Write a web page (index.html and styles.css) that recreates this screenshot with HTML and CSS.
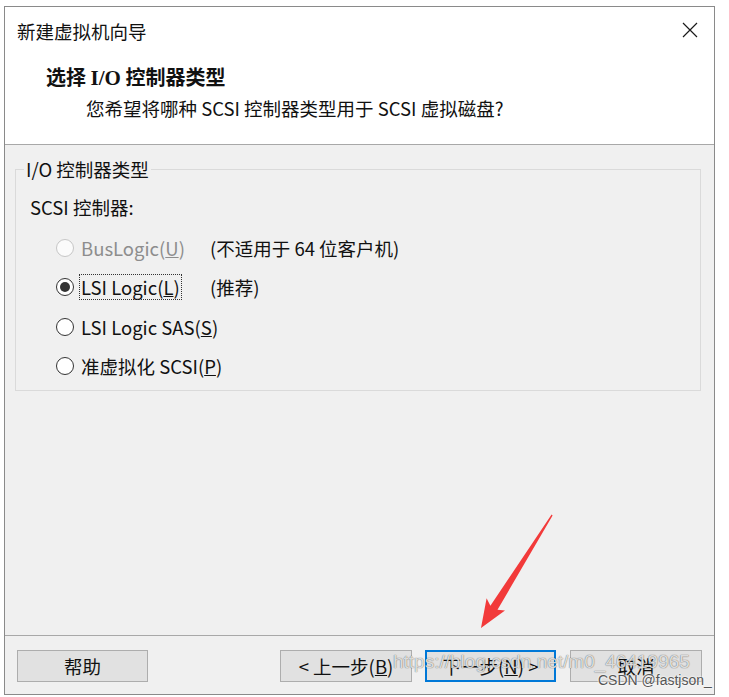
FILE: index.html
```html
<!DOCTYPE html>
<html lang="zh-CN">
<head>
<meta charset="utf-8">
<title>新建虚拟机向导</title>
<link rel="stylesheet" href="styles.css">
</head>
<body>
<div class="window">
  <div class="header">
    <div class="titlebar">
      <span class="title">新建虚拟机向导</span>
      <svg class="close" width="16" height="16" viewBox="0 0 16 16"><path d="M1 1 L15 15 M15 1 L1 15" stroke="#1a1a1a" stroke-width="1.2" fill="none"/></svg>
    </div>
    <div class="heading">选择 <span class="latin">I/O</span> 控制器类型</div>
    <div class="subtitle">您希望将哪种 SCSI 控制器类型用于 SCSI 虚拟磁盘?</div>
  </div>
  <div class="content">
    <fieldset class="group">
      <legend>I/O 控制器类型</legend>
      <div class="group-label">SCSI 控制器:</div>
      <div class="options">
        <div class="row disabled">
          <span class="radio"></span>
          <span class="opt"><span class="lbl">BusLogic(<u>U</u>)</span></span>
          <span class="note">(不适用于 64 位客户机)</span>
        </div>
        <div class="row">
          <span class="radio checked"></span>
          <span class="opt"><span class="lbl focus">LSI Logic(<u>L</u>)</span></span>
          <span class="note">(推荐)</span>
        </div>
        <div class="row">
          <span class="radio"></span>
          <span class="opt"><span class="lbl">LSI Logic SAS(<u>S</u>)</span></span>
        </div>
        <div class="row">
          <span class="radio"></span>
          <span class="opt"><span class="lbl">准虚拟化 SCSI(<u>P</u>)</span></span>
        </div>
      </div>
    </fieldset>
  </div>
  <div class="footer">
    <button class="btn help">帮助</button>
    <button class="btn">&lt; 上一步(<u>B</u>)</button>
    <button class="btn primary">下一步(<u>N</u>) &gt;</button>
    <button class="btn">取消</button>
  </div>
</div>
<svg class="arrow" width="729" height="697" viewBox="0 0 729 697">
  <polygon points="552.6,515.4 497.5,609.8 505,610.5 481,628 486.6,598.2 490.4,605.8 551.6,514.6" fill="#f23a3a"/>
</svg>
<div class="wm-url">https://blog.csdn.net/m0_46419965</div>
<div class="wm-tag">CSDN @fastjson_</div>
</body>
</html>
```
FILE: styles.css
```css
html, body {
  margin: 0;
  padding: 0;
  background: #ffffff;
}
body {
  position: relative;
  width: 729px;
  height: 697px;
  overflow: hidden;
  font-family: "Noto Sans CJK SC", "Noto Sans", sans-serif;
  color: #111;
}
.window {
  margin: 6px 0 0 4px;
  width: 711px;
  height: 689px;
  box-sizing: border-box;
  border: 1px solid #8a8a8a;
  background: #f0f0f0;
  display: flex;
  flex-direction: column;
}
.header {
  background: #ffffff;
  border-bottom: 1px solid #a8a8a8;
  height: 138px;
  box-sizing: border-box;
}
.titlebar {
  height: 48px;
  display: flex;
  align-items: center;
  justify-content: space-between;
  padding: 0 16px 0 12px;
}
.title {
  font-size: 18.5px;
  line-height: 24px;
}
.close {
  display: block;
  margin-top: -2px;
}
.heading {
  margin-top: 9px;
  padding-left: 41px;
  font-size: 20px;
  line-height: 26px;
  font-weight: bold;
}
.heading .latin {
  font-family: "Liberation Serif", serif;
  font-size: 21px;
}
.subtitle {
  margin-top: 4px;
  padding-left: 81px;
  font-size: 18.5px;
  line-height: 26px;
}
.content {
  flex: 1;
  padding: 14px 13px 0 10px;
}
.group {
  margin: 0;
  padding: 16px 14px 3px 14px;
  border: 1px solid #dadada;
  height: 232px;
  box-sizing: border-box;
}
.group legend {
  margin-left: -6px;
  padding: 0 2px;
  font-size: 18.5px;
  line-height: 20px;
}
.group-label {
  font-size: 18.5px;
  line-height: 24px;
}
.options {
  margin-top: 9px;
  padding-left: 26px;
}
.row {
  height: 39.5px;
  display: flex;
  align-items: center;
  font-size: 18.5px;
  white-space: nowrap;
}
.radio {
  width: 18px;
  height: 18px;
  box-sizing: border-box;
  border: 1px solid #333;
  border-radius: 50%;
  background: #fff;
  display: flex;
  align-items: center;
  justify-content: center;
  flex: none;
}
.radio.checked::after {
  content: "";
  width: 10px;
  height: 10px;
  border-radius: 50%;
  background: #333;
}
.opt {
  margin-left: 6px;
  width: 130px;
  flex: none;
  line-height: 24px;
}
.lbl {
  display: inline-block;
  padding: 0 1px;
}
.lbl.focus {
  outline: 1px dotted #333;
  outline-offset: 0;
}
.note {
  line-height: 24px;
}
.disabled .radio {
  border-color: #c6c6c6;
  background: #fbfbfb;
}
.disabled .opt {
  color: #8d8d8d;
}
.footer {
  border-top: 1px solid #a8a8a8;
  padding: 14px 12px 12px 12px;
  display: flex;
  gap: 13px;
}
.btn {
  width: 132px;
  height: 32px;
  box-sizing: border-box;
  border: 1px solid #adadad;
  background: #e1e1e1;
  font-family: "Noto Sans CJK SC", "Noto Sans", sans-serif;
  font-size: 18.5px;
  color: #111;
  padding: 0;
  line-height: 28px;
}
.btn.help {
  width: 131px;
  margin-right: auto;
}
.btn.primary {
  border: 2px solid #0078d7;
  width: 131px;
  margin-right: 1px;
}
.arrow {
  position: absolute;
  left: 0;
  top: 0;
  pointer-events: none;
}
.wm-url {
  position: absolute;
  left: 393px;
  top: 651px;
  font-family: "Liberation Sans", Arial, sans-serif;
  font-size: 19px;
  color: rgba(255, 255, 255, 0.8);
  text-shadow: 0 0 1px rgba(0, 0, 0, 0.5), 0 0 1px rgba(0, 0, 0, 0.3);
  white-space: nowrap;
}
.wm-tag {
  position: absolute;
  left: 598px;
  top: 672px;
  font-family: "Liberation Sans", Arial, sans-serif;
  font-size: 14px;
  color: #555;
  text-shadow: 0 0 2px #fff, 0 0 2px #fff;
  white-space: nowrap;
}
```
